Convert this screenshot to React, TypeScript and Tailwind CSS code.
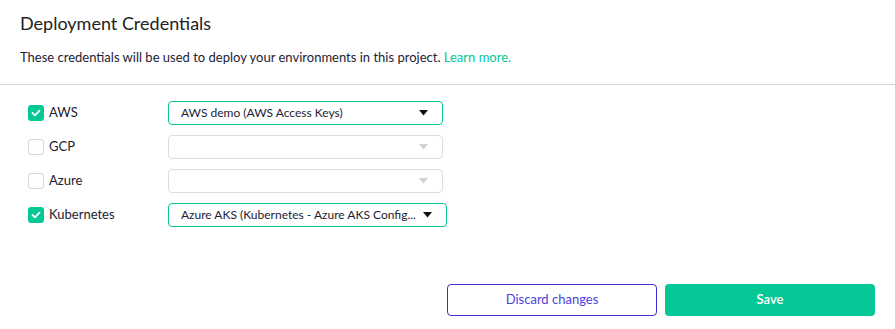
type Provider = {
    name: string
    checked: boolean
    value: string
    width: string
}

const providers: Provider[] = [
    { name: 'AWS', checked: true, value: 'AWS demo (AWS Access Keys)', width: 'w-[275px]' },
    { name: 'GCP', checked: false, value: '', width: 'w-[275px]' },
    { name: 'Azure', checked: false, value: '', width: 'w-[275px]' },
    { name: 'Kubernetes', checked: true, value: 'Azure AKS (Kubernetes - Azure AKS Config...', width: 'w-[279px]' },
]

function Checkbox({ checked }: { checked: boolean }) {
    if (checked) {
        return <div className="w-4 h-4 rounded-[3px] bg-[#06c896] flex items-center justify-center">
            <svg width="10" height="8" viewBox="0 0 10 8" fill="none">
                <path d="M1.5 4 L4 6.3 L8.5 1.6" stroke="white" strokeWidth="1.8" strokeLinecap="round" strokeLinejoin="round" />
            </svg>
        </div>
    }
    return <div className="w-4 h-4 rounded-[3px] border border-[#d3d7dd] bg-white"></div>
}

function Select({ p }: { p: Provider }) {
    return <div className={`${p.width} h-6 rounded-[4px] border flex items-center justify-between pl-3 pr-3 ${p.checked ? 'border-[#06c896]' : 'border-[#d9dce1]'}`}>
        <span className="text-[12px] text-[#1c2234] whitespace-nowrap overflow-hidden">{p.value}</span>
        <svg width="9" height="6" viewBox="0 0 9 6" className="shrink-0 mr-[2px]">
            <path d="M0 0 H9 L4.5 5.5 Z" fill={p.checked ? '#111' : '#cfd3d8'} />
        </svg>
    </div>
}

export default function App() {
    return <div className="w-[895px] h-[329px] bg-white font-['Lato',sans-serif] text-[#1c2234] flex flex-col">
        {/* header */}
        <div className="px-5 pt-[11px] h-[85px] border-b border-[#cfd5dd]">
            <h1 className="text-[18px] leading-[24px] text-[#222]">Deployment Credentials</h1>
            <p className="text-[13px] leading-[18px] mt-[13px]">
                These credentials will be used to deploy your environments in this project. <span className="text-[#06c896]">Learn more.</span>
            </p>
        </div>
        {/* providers */}
        <div className="flex flex-col gap-[10px] pt-[16px] pl-[28px]">
            {providers.map(p => (
                <div key={p.name} className="flex flex-row items-center h-6">
                    <Checkbox checked={p.checked} />
                    <span className="text-[13px] ml-[5px] w-[119px]">{p.name}</span>
                    <Select p={p} />
                </div>
            ))}
        </div>
        {/* buttons */}
        <div className="mt-auto mb-[13px] pr-5 flex flex-row justify-end gap-2">
            <button className="w-[210px] h-8 rounded-[4px] border border-[#3b2fd6] text-[#4b3fe0] text-[13px] bg-white">
                Discard changes
            </button>
            <button className="w-[210px] h-8 rounded-[4px] bg-[#06c896] text-white text-[13px] font-semibold">
                Save
            </button>
        </div>
    </div>
}
